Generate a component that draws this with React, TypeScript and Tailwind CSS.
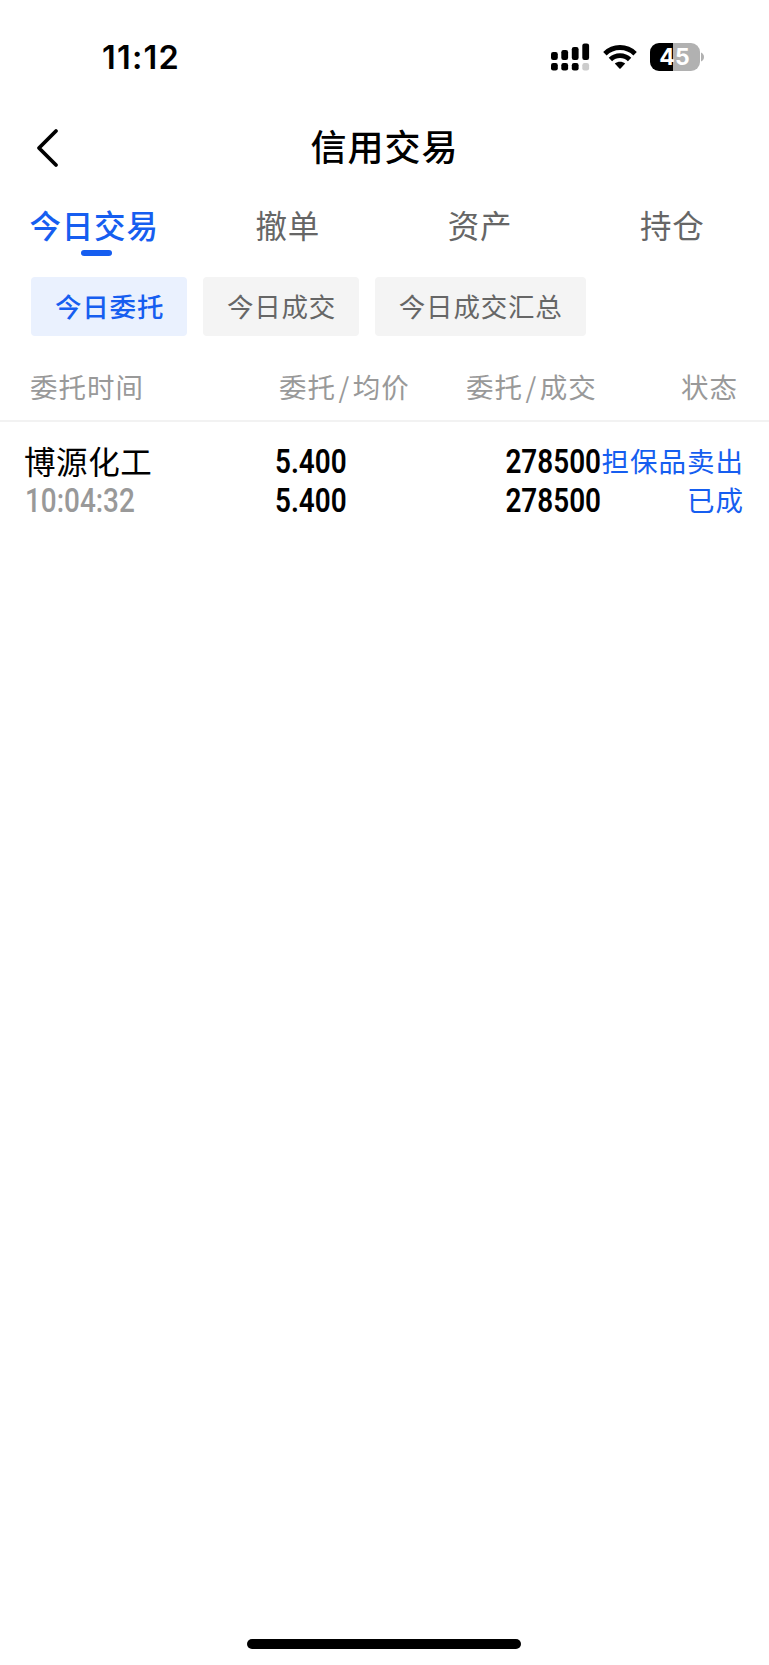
import type { ReactNode } from "react";

const CJK = "font-['Noto_Sans_CJK_SC',sans-serif]";

const tabs = ["今日交易", "撤单", "资产", "持仓"];
const chips = ["今日委托", "今日成交", "今日成交汇总"];

function SignalIcon() {
  return (
    <svg width="39" height="28" viewBox="0 0 39 28">
      <rect x="0" y="9" width="6.8" height="8" rx="2.2" />
      <rect x="10.3" y="7" width="6.8" height="10" rx="2.2" />
      <rect x="20.8" y="4" width="6.8" height="13" rx="2.2" />
      <rect x="31.3" y="0.5" width="6.8" height="16.5" rx="2.2" />
      <rect x="0" y="20" width="6.8" height="7.4" rx="2.2" />
      <rect x="10.3" y="20" width="6.8" height="7.4" rx="2.2" />
      <rect x="20.8" y="20" width="6.8" height="7.4" rx="2.2" />
      <rect x="31.3" y="20" width="6.8" height="7.4" rx="2.2" fill="#cccccc" />
    </svg>
  );
}

function WifiIcon() {
  return (
    <svg width="34" height="28" viewBox="0 0 34 28">
      <g fill="none" stroke="#000" strokeWidth="4.8">
        <path d="M1.9 10.7C10.2 2.4 23.8 2.4 32.1 10.7" />
        <path d="M7.4 16.5C12.8 11.2 21.2 11.2 26.6 16.5" />
      </g>
      <path d="M11.8 20.6C14.9 18 19.1 18 22.2 20.6L17.6 25.5Q17 26.1 16.4 25.5Z" />
    </svg>
  );
}

function BatteryIcon() {
  return (
    <div className="flex items-center gap-px">
      <div className="flex h-7 w-[50px] items-center justify-center rounded-[9px] bg-[linear-gradient(90deg,#000_46%,#b1b1b1_46%)] pr-px font-['Inter',sans-serif] text-[23px] leading-7 font-bold text-white">
        45
      </div>
      <svg width="3" height="10" viewBox="0 0 3 10">
        <path d="M0 0.5Q3 2 3 5T0 9.5Z" fill="#b1b1b1" />
      </svg>
    </div>
  );
}

function Digits({ children, right = false }: { children: ReactNode; right?: boolean }) {
  return (
    <span
      className={
        "block scale-x-[0.82] whitespace-nowrap font-['Roboto',sans-serif] text-[34px] leading-[39px] " +
        (right ? "origin-right text-right" : "origin-left")
      }
    >
      {children}
    </span>
  );
}

function Slash() {
  return <span className="mx-[2.5px]">/</span>;
}

export default function App() {
  return (
    <div className={`flex h-[1665px] w-[769px] flex-col overflow-hidden bg-white text-black ${CJK}`}>
      <div className="flex h-[114px] items-center justify-between pr-[65px] pl-[102px]">
        <span className="pt-[2px] font-['Inter',sans-serif] text-[32.5px] leading-[38px] font-semibold tracking-[1.2px]">
          11:12
        </span>
        <div className="flex items-center">
          <SignalIcon />
          <div className="w-[13px]" />
          <WifiIcon />
          <div className="w-[13px]" />
          <BatteryIcon />
        </div>
      </div>

      <header className="grid h-[68px] grid-cols-[80px_1fr_80px] items-center">
        <svg className="ml-[36px]" width="24" height="40" viewBox="0 0 24 40">
          <path d="M20 3L3 20L20 37" fill="none" stroke="#000" strokeWidth="3.8" strokeLinecap="round" strokeLinejoin="round" />
        </svg>
        <h1 className="pb-[5px] text-center text-[36px] leading-[63px] font-medium tracking-[1px]">信用交易</h1>
      </header>

      <nav className="grid h-[75px] grid-cols-4">
        {tabs.map((t, i) => (
          <div key={t} className="flex flex-col items-center">
            <span
              className={
                "mt-[22px] text-[31.5px] leading-[40px] tracking-[0.8px] whitespace-nowrap " +
                (i === 0 ? "mr-[4px] font-medium text-[#165ef0]" : "mr-[1px] text-[#666666]")
              }
            >
              {t}
            </span>
            {i === 0 && <span className="mt-[5.5px] h-[6px] w-[31px] rounded-full bg-[#165ef0]" />}
          </div>
        ))}
      </nav>

      <div className="mt-[20px] flex h-[58.5px] gap-[15.5px] pl-[31px]">
        {chips.map((c, i) => (
          <span
            key={c}
            className={
              "rounded-[4px] pr-[23.2px] pl-[24px] text-[26.5px] leading-[58px] tracking-[0.8px] whitespace-nowrap " +
              (i === 0 ? "bg-[#eaf1fe] font-medium text-[#165ef0]" : "bg-[#f4f4f4] text-[#666666]")
            }
          >
            {c}
          </span>
        ))}
      </div>

      <div className="mt-[20px] grid h-[66px] grid-cols-[249px_187px_215px_1fr] border-b-2 border-[#f2f2f2] pl-[30px] text-[27.5px] leading-[60px] tracking-[1px] whitespace-nowrap text-[#999999]">
        <span>委托时间</span>
        <span>
          委托
          <Slash />
          均价
        </span>
        <span>
          委托
          <Slash />
          成交
        </span>
        <span>状态</span>
      </div>

      <div className="mt-[19.5px] grid grid-cols-[251px_161px_165px_1fr] pr-[25px] pl-[24px] leading-[39px] whitespace-nowrap">
        <div>
          <div className="text-[31.5px] tracking-[0.6px]">博源化工</div>
          <div className="pt-px pl-px font-medium text-[#999999]">
            <Digits>10:04:32</Digits>
          </div>
        </div>
        <div className="pt-px font-semibold">
          <Digits>5.400</Digits>
          <Digits>5.400</Digits>
        </div>
        <div className="pt-px font-semibold">
          <Digits right>278500</Digits>
          <Digits right>278500</Digits>
        </div>
        <div className="text-right text-[27.5px] tracking-[1px] text-[#165ef0]">
          <div>担保品卖出</div>
          <div>已成</div>
        </div>
      </div>

      <div className="mt-auto mb-[16px] ml-[247px] h-[10px] w-[274px] rounded-full bg-black" />
    </div>
  );
}
